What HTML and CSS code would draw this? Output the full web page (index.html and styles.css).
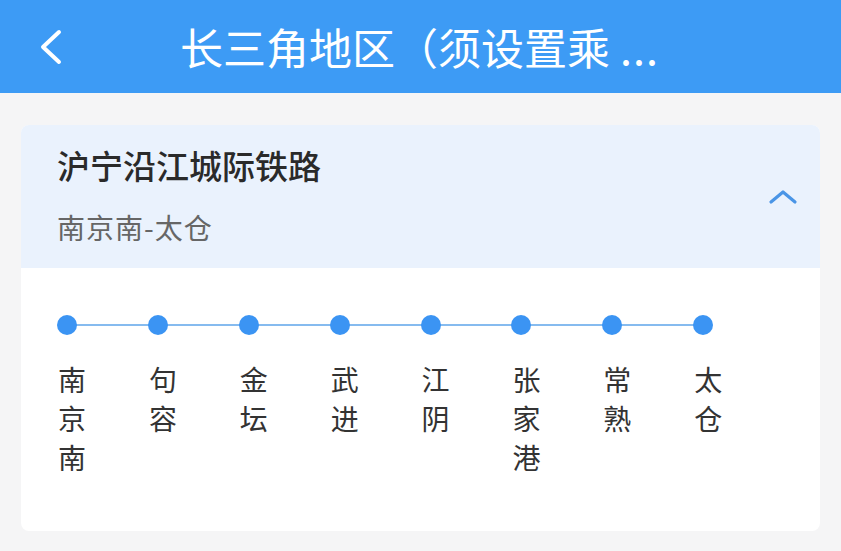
FILE: index.html
```html
<!DOCTYPE html>
<html lang="zh-CN">
<head>
<meta charset="utf-8">
<title>长三角地区</title>
<link rel="stylesheet" href="styles.css">
</head>
<body>
  <header class="topbar">
    <button class="back" aria-label="返回">
      <svg width="26" height="36" viewBox="0 0 26 36"><polyline points="21,3 5,18 21,33" fill="none" stroke="#fff" stroke-width="4" stroke-linecap="round" stroke-linejoin="round"/></svg>
    </button>
    <h1 class="title">长三角地区（须设置乘<span class="ellipsis">...</span></h1>
  </header>

  <main class="content">
    <section class="line-card">
      <div class="line-head">
        <div class="line-info">
          <h2 class="line-name">沪宁沿江城际铁路</h2>
          <p class="line-range">南京南-太仓</p>
        </div>
        <svg class="toggle" width="30" height="16" viewBox="0 0 30 16"><polyline points="3,13 15,3 27,13" fill="none" stroke="#4a95e6" stroke-width="3.2" stroke-linecap="round" stroke-linejoin="round"/></svg>
      </div>
      <ol class="stations">
        <li class="station"><span class="dot"></span><span class="name">南京南</span></li>
        <li class="station"><span class="dot"></span><span class="name">句容</span></li>
        <li class="station"><span class="dot"></span><span class="name">金坛</span></li>
        <li class="station"><span class="dot"></span><span class="name">武进</span></li>
        <li class="station"><span class="dot"></span><span class="name">江阴</span></li>
        <li class="station"><span class="dot"></span><span class="name">张家港</span></li>
        <li class="station"><span class="dot"></span><span class="name">常熟</span></li>
        <li class="station"><span class="dot"></span><span class="name">太仓</span></li>
      </ol>
    </section>
  </main>
</body>
</html>
```

FILE: styles.css
```css
* { box-sizing: border-box; }

body {
  margin: 0;
  background: #f5f5f6;
  font-family: "Noto Sans CJK SC", "Noto Sans", sans-serif;
  color: #222;
}

.topbar {
  height: 93px;
  background: #3d9bf5;
  display: flex;
  align-items: center;
  padding-left: 38px;
}

.back {
  border: 0;
  background: none;
  padding: 0;
  width: 26px;
  height: 36px;
  display: flex;
}

.title {
  margin: 0 0 0 116px;
  font-size: 43px;
  font-weight: 400;
  color: #fff;
  line-height: 1.2;
  white-space: nowrap;
}

.ellipsis {
  margin-left: 10px;
  letter-spacing: 1px;
}

.content {
  padding: 32px 21px;
}

.line-card {
  background: #fff;
  border-radius: 8px;
  overflow: hidden;
}

.line-head {
  background: #eaf2fd;
  display: flex;
  align-items: center;
  justify-content: space-between;
  padding: 20px 22px 24px 36px;
}

.line-name {
  margin: 0;
  font-size: 33px;
  font-weight: 500;
  line-height: 40px;
  color: #2a2a2a;
}

.line-range {
  margin: 25px 0 0;
  font-size: 28px;
  line-height: 34px;
  letter-spacing: 1px;
  color: #666;
}

.toggle { margin-top: 4px; }

.stations {
  list-style: none;
  margin: 0;
  padding: 47px 36px 54px;
  display: flex;
}

.station {
  position: relative;
  width: 91px;
  display: flex;
  flex-direction: column;
  align-items: flex-start;
}

/* connector to the next stop */
.station:not(:last-child)::after {
  content: "";
  position: absolute;
  left: 10px;
  top: 9px;
  width: 91px;
  height: 2px;
  background: #86bbef;
}

.dot {
  position: relative;
  z-index: 1;
  width: 20px;
  height: 20px;
  border-radius: 50%;
  background: #3b94f3;
}

.name {
  margin-top: 25px;
  margin-left: 1px;
  width: 30px;
  font-size: 28px;
  line-height: 39px;
  color: #333;
  word-break: break-all;
}
```
